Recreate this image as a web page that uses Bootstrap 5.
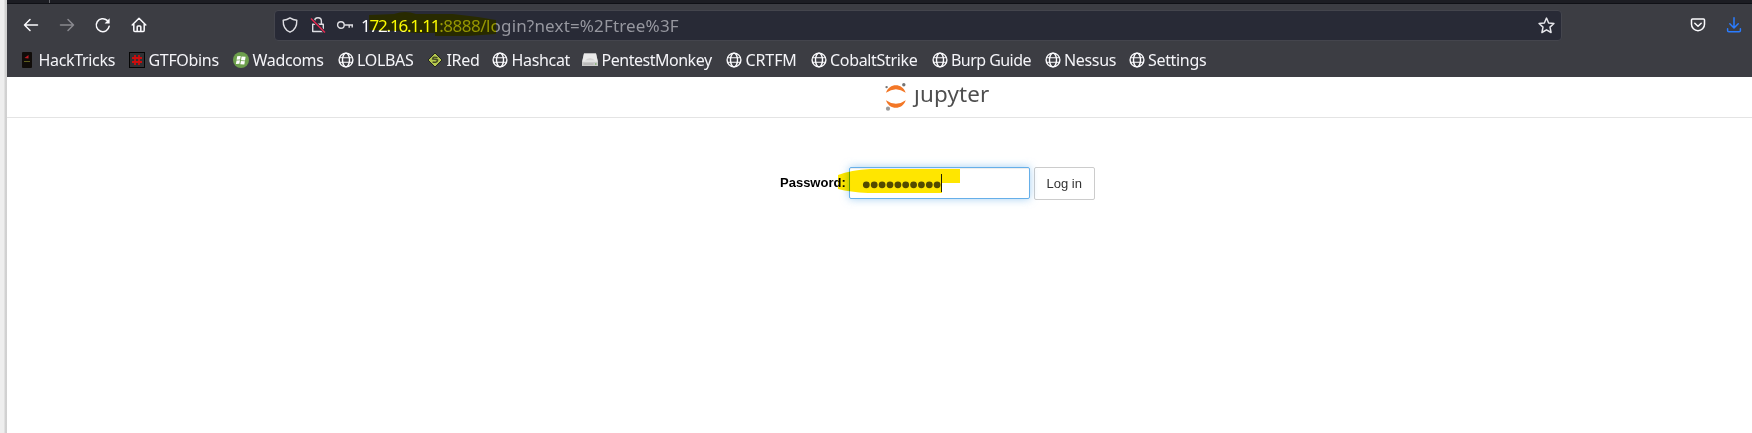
<!DOCTYPE html>
<html lang="en">
<head>
<meta charset="utf-8">
<meta name="viewport" content="width=device-width, initial-scale=1">
<title>Jupyter Notebook</title>
<link rel="stylesheet" href="https://cdn.jsdelivr.net/npm/bootstrap@5.3.0/dist/css/bootstrap.min.css">
<style>
body{height:433px;overflow:hidden;background:#fff;font-family:"Noto Sans",sans-serif}
svg{display:block;flex:none;overflow:visible}
.edge{width:7px;flex:none;background:linear-gradient(90deg,#eee 0 4px,#d2d2d2 5px,#d0d0d0)}
.tabs-strip{height:4px;background:#1c1d23;border-bottom:1px solid #101116}
.tab-sep{width:1px;height:3px;margin-left:42px;background:#66676c}
.chrome{height:73px;background:#3c3d43;color:#fbfbfe}
.tools{height:42px;padding-left:16px}
.tool{width:16px;height:16px;margin-right:20px}
.address{width:1288px;height:31px;margin-left:107px;padding-left:7px;background:#282a36;border:1px solid #44454d;border-radius:4px;font-size:17px;line-height:29px}
.address .host{letter-spacing:-1.2px}
.address .port{color:#96979f;letter-spacing:-.5px}
.address .path{color:#96979f;letter-spacing:.16px}
.hl{position:absolute;mix-blend-mode:multiply;pointer-events:none}
.marks{display:grid;grid-template-columns:110px 104px 104.5px 89.5px 65px 90px 144px 84.5px 121px 113px 84px 80px;height:31px;padding:0 0 3px 12px;font-size:16px;line-height:24px;letter-spacing:-.33px}
.marks a{color:#f4f4f8;gap:3.5px}
.marks a:nth-child(7){letter-spacing:-.48px}
.marks a:nth-child(8){letter-spacing:-.1px}
.marks a:nth-child(10){letter-spacing:-.55px}
.brandbar{height:41px;border-bottom:1px solid #e4e4e4}
.brandtext{font-size:22.4px;line-height:30px;color:#4e4e4e;letter-spacing:.15px;clip-path:polygon(7px 0,100% 0,100% 100%,-5px 100%,-5px 10px,7px 10px)}
.login{margin-top:49px;padding-left:773px;font:13px/18px "Liberation Sans",Arial,sans-serif;color:#000}
.pw{width:181px;height:32px;margin-left:3px;border:1px solid #66afe9;border-radius:2px;box-shadow:inset 0 1px 1px rgba(0,0,0,.075),0 0 8px rgba(102,175,233,.6)}
.go{width:61px;height:33px;margin-left:4px;padding:0;border:1px solid #ccc;border-radius:2px;font:13px/18px "Liberation Sans",Arial,sans-serif;color:#333;background:#fff}
</style>
</head>
<body>
<svg width="0" height="0" class="position-absolute" aria-hidden="true">
<symbol id="globe" viewBox="0 0 16 16"><g fill="none" stroke="#fbfbfe" stroke-width="1.4"><circle cx="8" cy="8" r="6.9"/><ellipse cx="8" cy="8" rx="3.5" ry="6.9"/><path d="M1.5 5.800h13M1.500 10.200h13" stroke-width="1.100"/></g></symbol>
</svg>
<div class="d-flex h-100">
<div class="edge"></div>
<div class="flex-grow-1 overflow-hidden">
<div class="tabs-strip"><div class="tab-sep"></div></div>
<header class="chrome">
<div class="tools d-flex align-items-center">
<svg class="tool" viewBox="0 0 16 16" fill="none" stroke="#fbfbfe" stroke-width="1.5" stroke-linecap="round" stroke-linejoin="round"><path d="M14.5 8H1.5M7 2.5 1.5 8 7 13.5"/></svg>
<svg class="tool" viewBox="0 0 16 16" fill="none" stroke="#89898f" stroke-width="1.5" stroke-linecap="round" stroke-linejoin="round"><path d="M1.5 8h13M9 2.5 14.5 8 9 13.5"/></svg>
<svg class="tool" viewBox="0 0 16 16" fill="none" stroke="#fbfbfe" stroke-width="1.5" stroke-linecap="round"><path d="M12.2 3.4A6.5 6.5 0 1 0 14.2 9.2"/><path d="M14.6 1.2v5.2H9.6z" fill="#fbfbfe" stroke="none"/></svg>
<svg class="tool" viewBox="0 0 16 16" fill="none" stroke="#fbfbfe" stroke-width="1.5" stroke-linecap="round" stroke-linejoin="round"><path d="M1.2 8 8 1.2 14.8 8M2.8 7v6.6q0 1 1 1h8.4q1 0 1-1V7M6.2 14V9.7q0-.8.8-.8h2q.8 0 .8.8V14"/></svg>
<div class="address d-flex align-items-center position-relative">
<svg width="16" height="16" viewBox="0 0 16 16" fill="none" stroke="#dedee3" stroke-width="1.4" stroke-linejoin="round"><path d="M8 .9Q5 3 1.2 3.3C1 9 3 13.2 8 15.2 13 13.2 15 9 14.8 3.3Q11 3 8 .9z"/></svg>
<svg class="me-1" style="margin-left:12px" width="16" height="16" viewBox="0 0 16 16" fill="none" stroke="#dedee3" stroke-width="1.4"><path d="M4.6 7V4.2a3.4 3.4 0 0 1 6.8 0V7M2.7 7.2h10.6v7.3H2.7z" stroke-linejoin="round"/><path d="m1 1.5 14 14" stroke="#282a36" stroke-width="3"/><path d="m1 1.5 14 14" stroke="#e22850" stroke-width="1.5"/></svg>
<svg style="margin-left:7px" width="16" height="16" viewBox="0 0 16 16" fill="none" stroke="#dedee3" stroke-width="1.4"><circle cx="3.9" cy="8" r="3.3"/><path d="M7.2 8H16M12.2 8v2.8M15.2 8v2.4"/></svg>
<div style="margin-left:8px" class="text-nowrap"><span class="host">172.16.1.11</span><span class="port">:8888/</span><span class="path">login?next=%2Ftree%3F</span></div>
<svg class="ms-auto" style="margin-right:6px" width="17" height="17" viewBox="0 0 16 16" fill="none" stroke="#e6e6eb" stroke-width="1.4" stroke-linejoin="round"><path d="m8 1 2 4.6 5 .5-3.7 3.4 1 5.1L8 12.1l-4.300 2.500 1-5.100L1 6.100l5-.5z"/></svg>
<svg class="hl" style="left:93px;top:0" width="130" height="27" viewBox="0 0 130 27"><path d="M1 4 26 3Q37-1 48 3L85 3 110 6 128 9V23L100 25H67V22L48 22 30 20 1 19z" fill="#ff0"/></svg>
</div>
<svg style="margin-left:128px" width="16" height="16" viewBox="0 0 16 16" fill="none" stroke="#fbfbfe" stroke-width="1.5" stroke-linecap="round" stroke-linejoin="round"><path d="M2.500 2h11q1 0 1 1v4.200a6.500 6.500 0 0 1-13 0V3q0-1 1-1zM4.800 6.200 8 9.200l3.200-3"/></svg>
<svg style="margin-left:20px" width="16" height="16" viewBox="0 0 16 16" fill="none" stroke="#2a7cff" stroke-width="1.5" stroke-linecap="round" stroke-linejoin="round"><path d="M8 .8v10M3.8 6.8 8 11l4.2-4.200M1.600 11.800v1.600q0 1.300 1.300 1.300h10.200q1.300 0 1.300-1.300v-1.600"/></svg>
</div>
<nav class="marks align-items-center text-nowrap">
<a class="d-flex align-items-center text-decoration-none"><svg width="16" height="16" viewBox="0 0 16 16"><rect x="3" width="10" height="16" rx="1" fill="#100c09"/><path d="M5.500 6 9.500 3v3.500z" fill="#bd1b24"/><path d="M5 9.500h6" stroke="#5f5e1d"/></svg><span>HackTricks</span></a>
<a class="d-flex align-items-center text-decoration-none"><svg width="16" height="16" viewBox="0 0 16 16"><rect x=".5" y=".5" width="15" height="15" fill="#303134" stroke="#050505"/><path d="M6 3v10M10 3v10M3 6h10M3 10h10" stroke="#cc0d0d" stroke-width="1.800"/></svg><span>GTFObins</span></a>
<a class="d-flex align-items-center text-decoration-none"><svg width="16" height="16" viewBox="0 0 16 16"><circle cx="8" cy="8" r="8" fill="#6d9f4c"/><path d="m4.200 4.300 3.500-.4-.6 3.700-3.500.2zM8.600 4.500l4 .2-.6 3.800-4-.3zM3.500 8.600 7 8.300l-.6 3.500-3.500.1zM7.900 8.900l4 .3-.6 3.300-4-.3z" fill="#fff"/></svg><span>Wadcoms</span></a>
<a class="d-flex align-items-center text-decoration-none"><svg width="16" height="16"><use href="#globe"/></svg><span>LOLBAS</span></a>
<a class="d-flex align-items-center text-decoration-none"><svg width="16" height="16" viewBox="0 0 16 16"><path d="m8 1 7 7-7 7-7-7z" fill="#b5c84e" stroke="#24251f"/><path d="M10.500 5.800Q6 4 5.600 7q3 .2 5 1-.6 3.200-5 2" fill="none" stroke="#464c25" stroke-width="1.5"/></svg><span>IRed</span></a>
<a class="d-flex align-items-center text-decoration-none"><svg width="16" height="16"><use href="#globe"/></svg><span>Hashcat</span></a>
<a class="d-flex align-items-center text-decoration-none"><svg width="16" height="16" viewBox="0 0 16 16"><path d="M2 1.500h12l2 8.500v4H0v-4z" fill="#c9c9c9"/><path d="M2 1.500h12l1.800 8.200H.2z" fill="#e9e9e9"/><path d="M3 8.500q5-5 10 0" fill="#d5d5d5"/><path d="M1.500 12h10" stroke="#aaa"/><path d="M13 12h1.500" stroke="#56a33b"/></svg><span>PentestMonkey</span></a>
<a class="d-flex align-items-center text-decoration-none"><svg width="16" height="16"><use href="#globe"/></svg><span>CRTFM</span></a>
<a class="d-flex align-items-center text-decoration-none"><svg width="16" height="16"><use href="#globe"/></svg><span>CobaltStrike</span></a>
<a class="d-flex align-items-center text-decoration-none"><svg width="16" height="16"><use href="#globe"/></svg><span>Burp Guide</span></a>
<a class="d-flex align-items-center text-decoration-none"><svg width="16" height="16"><use href="#globe"/></svg><span>Nessus</span></a>
<a class="d-flex align-items-center text-decoration-none"><svg width="16" height="16"><use href="#globe"/></svg><span>Settings</span></a>
</nav>
</header>
<main>
<div class="brandbar d-flex">
<svg style="margin:5px 0 0 877px" width="24" height="30" viewBox="0 0 24 30"><path d="M2 10.800C5 .8 18.700 .8 21.700 10.800Q12 3.600 2 10.800zM2 18.200Q12 25.400 21.700 18.200C18.700 28.200 5 28.200 2 18.200z" fill="#f37726"/><circle cx="2.600" cy="5.100" r="1.200" fill="#757575"/><circle cx="19.800" cy="2.700" r="1.700" fill="#757575"/><circle cx="4" cy="26.700" r="2.100" fill="#9a9a9a"/></svg>
<div class="brandtext" style="margin:2px 0 0 6px">jupyter</div>
</div>
<div class="login d-flex align-items-start">
<label class="fw-bold" style="margin-top:7px">Password:</label>
<div class="pw position-relative">
<svg width="179" height="30" viewBox="0 0 179 30"><g fill="#525252"><circle cx="16.300" cy="16.800" r="3.400"/><circle cx="24.200" cy="16.800" r="3.400"/><circle cx="32.100" cy="16.800" r="3.400"/><circle cx="40" cy="16.800" r="3.400"/><circle cx="47.900" cy="16.800" r="3.400"/><circle cx="55.700" cy="16.800" r="3.400"/><circle cx="63.600" cy="16.800" r="3.400"/><circle cx="71.400" cy="16.800" r="3.400"/><circle cx="79.300" cy="16.800" r="3.400"/><circle cx="87.100" cy="16.800" r="3.400"/></g><path d="M91.500 6v18" stroke="#222"/></svg>
<svg class="hl" style="left:-12px;top:0" width="123" height="26" viewBox="0 0 123 26"><path d="M0 7Q13 2 32 1H122V15H104V25H30Q12 24 0 21z" fill="#ffe600"/></svg>
</div>
<button class="go" type="button">Log in</button>
</div>
</main>
</div>
</div>
<script src="https://cdn.jsdelivr.net/npm/bootstrap@5.3.0/dist/js/bootstrap.bundle.min.js"></script>
</body>
</html>
